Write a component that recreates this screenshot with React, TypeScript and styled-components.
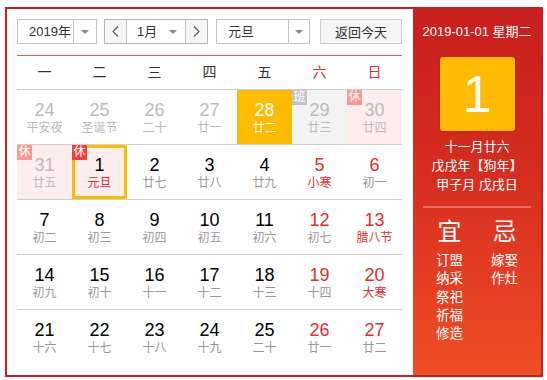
import styled, { createGlobalStyle, css } from "styled-components";

const GlobalStyle = createGlobalStyle`
  html, body {
    margin: 0;
    padding: 0;
    background: #fff;
  }
  body {
    font-family: "Liberation Sans", "Noto Sans CJK SC", sans-serif;
  }
`;

type Tone = "normal" | "weekend";
type Mark = "rest" | "work";

interface Day {
  num: number;
  lunar: string;
  other?: boolean;
  tone?: Tone;
  festival?: boolean;
  mark?: Mark;
  hover?: boolean;
  selected?: boolean;
}

const weeks: Day[][] = [
  [
    { num: 24, lunar: "平安夜", other: true },
    { num: 25, lunar: "圣诞节", other: true },
    { num: 26, lunar: "二十", other: true },
    { num: 27, lunar: "廿一", other: true },
    { num: 28, lunar: "廿二", other: true, hover: true },
    { num: 29, lunar: "廿三", other: true, mark: "work" },
    { num: 30, lunar: "廿四", other: true, mark: "rest" },
  ],
  [
    { num: 31, lunar: "廿五", other: true, mark: "rest" },
    { num: 1, lunar: "元旦", festival: true, mark: "rest", selected: true },
    { num: 2, lunar: "廿七" },
    { num: 3, lunar: "廿八" },
    { num: 4, lunar: "廿九" },
    { num: 5, lunar: "小寒", tone: "weekend", festival: true },
    { num: 6, lunar: "初一", tone: "weekend" },
  ],
  [
    { num: 7, lunar: "初二" },
    { num: 8, lunar: "初三" },
    { num: 9, lunar: "初四" },
    { num: 10, lunar: "初五" },
    { num: 11, lunar: "初六" },
    { num: 12, lunar: "初七", tone: "weekend" },
    { num: 13, lunar: "腊八节", tone: "weekend", festival: true },
  ],
  [
    { num: 14, lunar: "初九" },
    { num: 15, lunar: "初十" },
    { num: 16, lunar: "十一" },
    { num: 17, lunar: "十二" },
    { num: 18, lunar: "十三" },
    { num: 19, lunar: "十四", tone: "weekend" },
    { num: 20, lunar: "大寒", tone: "weekend", festival: true },
  ],
  [
    { num: 21, lunar: "十六" },
    { num: 22, lunar: "十七" },
    { num: 23, lunar: "十八" },
    { num: 24, lunar: "十九" },
    { num: 25, lunar: "二十" },
    { num: 26, lunar: "廿一", tone: "weekend" },
    { num: 27, lunar: "廿二", tone: "weekend" },
  ],
];

const weekdays = ["一", "二", "三", "四", "五", "六", "日"];
const goodList = ["订盟", "纳采", "祭祀", "祈福", "修造"];
const badList = ["嫁娶", "作灶"];

const Calendar = styled.div`
  margin: 7px 0 0 5px;
  width: 538px;
  height: 370px;
  box-sizing: border-box;
  border: 2px solid #c91f1e;
  display: flex;
`;

const Main = styled.div`
  flex: 1;
  min-width: 0;
  padding: 10px 11px 0 10px;
  background: #fff;
`;

const Toolbar = styled.div`
  display: flex;
  align-items: center;
  height: 25px;
  margin-bottom: 11px;
`;

const Select = styled.div<{ $width: number; $text: number }>`
  display: flex;
  width: ${(p) => p.$width}px;
  height: 25px;
  box-sizing: border-box;
  border: 1px solid #c4c4c4;
  font-size: 13px;
  color: #333;
  & > span:first-child {
    width: ${(p) => p.$text}px;
    padding-left: 11px;
    line-height: 23px;
    box-sizing: border-box;
  }
`;

const Caret = styled.span`
  flex: 1;
  display: flex;
  align-items: center;
  justify-content: center;
  border-left: 1px solid #c4c4c4;
  &::after {
    content: "";
    border-left: 4px solid transparent;
    border-right: 4px solid transparent;
    border-top: 4px solid #8a8a8a;
  }
`;

const MonthGroup = styled.div`
  display: flex;
  width: 104px;
  height: 25px;
  box-sizing: border-box;
  border: 1px solid #b5b5b5;
  margin: 0 8px 0 7px;
  font-size: 13px;
  color: #333;
`;

const StepButton = styled.span<{ $side: "left" | "right" }>`
  width: 22px;
  box-sizing: border-box;
  display: flex;
  align-items: center;
  justify-content: center;
  background: #f7f7f7;
  ${(p) =>
    p.$side === "left"
      ? css`border-right: 1px solid #c4c4c4;`
      : css`border-left: 1px solid #c4c4c4;`}
  svg {
    width: 7px;
    height: 11px;
  }
`;

const MonthSelect = styled.span`
  flex: 1;
  display: flex;
  align-items: center;
  & > span:first-child {
    width: 36px;
    padding-left: 10px;
    line-height: 23px;
    box-sizing: border-box;
  }
  & > span:last-child {
    flex: 1;
    display: flex;
    justify-content: center;
    padding-right: 2px;
    &::after {
      content: "";
      border-left: 4px solid transparent;
      border-right: 4px solid transparent;
      border-top: 4px solid #8a8a8a;
    }
  }
`;

const TodayButton = styled.button`
  margin-left: 10px;
  width: 82px;
  height: 25px;
  box-sizing: border-box;
  border: 1px solid #cfcfcf;
  background: #f5f5f5;
  font-family: inherit;
  font-size: 13px;
  color: #333;
  padding: 0;
`;

const Header = styled.div`
  display: grid;
  grid-template-columns: repeat(7, 55px);
  height: 33px;
  border-top: 1px solid #e5594f;
  border-bottom: 1px solid #cfcfcf;
`;

const Weekday = styled.div<{ $red: boolean }>`
  text-align: center;
  line-height: 33px;
  font-size: 14px;
  color: ${(p) => (p.$red ? "#e62d2d" : "#333")};
`;

const Week = styled.div<{ $last: boolean }>`
  display: grid;
  grid-template-columns: repeat(7, 55px);
  border-bottom: ${(p) => (p.$last ? "none" : "1px solid #cfcfcf")};
`;

const Cell = styled.div<{ $bg: string; $selected: boolean }>`
  position: relative;
  height: 54px;
  box-sizing: border-box;
  padding-top: 10px;
  text-align: center;
  background: ${(p) => p.$bg};
  ${(p) => p.$selected && css`box-shadow: inset 0 0 0 3px #ffbb00;`}
`;

const Num = styled.div<{ $color: string }>`
  font-size: 18px;
  line-height: 20px;
  color: ${(p) => p.$color};
`;

const Lunar = styled.div<{ $color: string }>`
  font-size: 12px;
  line-height: 16px;
  color: ${(p) => p.$color};
`;

const Badge = styled.span<{ $bg: string }>`
  position: absolute;
  top: 0;
  left: 0;
  width: 15px;
  height: 15px;
  line-height: 15px;
  font-size: 12px;
  text-align: center;
  color: #fff;
  background: ${(p) => p.$bg};
`;

const Side = styled.div`
  width: 128px;
  flex-shrink: 0;
  background: linear-gradient(180deg, #c91f1e 0%, #d62d20 45%, #f04e25 100%);
  color: #fff;
  display: flex;
  flex-direction: column;
  align-items: center;
`;

const DateLine = styled.div`
  margin-top: 13px;
  font-size: 13px;
  line-height: 20px;
`;

const DayBox = styled.div`
  margin-top: 15px;
  width: 75px;
  height: 74px;
  border-radius: 3px;
  background: #ffbb00;
  box-shadow: 0 1px 3px rgba(120, 20, 0, 0.3);
  display: flex;
  align-items: center;
  justify-content: center;
  font-size: 52px;
  color: #fff;
`;

const LunarInfo = styled.div`
  margin-top: 6px;
  font-size: 13px;
  line-height: 19px;
  text-align: center;
`;

const Divider = styled.div`
  margin-top: 12px;
  width: 108px;
  height: 2px;
  background: rgba(255, 255, 255, 0.3);
`;

const Almanac = styled.div`
  margin-top: 9px;
  display: grid;
  grid-template-columns: 55px 55px;
`;

const AlmanacCol = styled.div`
  display: flex;
  flex-direction: column;
  align-items: center;
`;

const AlmanacTitle = styled.div`
  font-size: 24px;
  line-height: 30px;
  margin-bottom: 5px;
`;

const AlmanacItem = styled.div`
  font-size: 13.5px;
  line-height: 18.3px;
`;

const Chevron = ({ dir }: { dir: "left" | "right" }) => (
  <svg viewBox="0 0 7 11">
    <path
      d={dir === "left" ? "M6 0.5 L1 5.5 L6 10.5" : "M1 0.5 L6 5.5 L1 10.5"}
      fill="none"
      stroke="#555"
      strokeWidth="1.1"
    />
  </svg>
);

function cellBg(d: Day) {
  if (d.hover) return "#ffbb00";
  if (d.mark === "work") return "#f3f3f3";
  if (d.mark === "rest") return "#fdeeee";
  return "#fff";
}

function numColor(d: Day) {
  if (d.hover) return "#fff";
  if (d.other) return "#bbb";
  return d.tone === "weekend" ? "#e62d2d" : "#000";
}

function lunarColor(d: Day) {
  if (d.hover) return "#fff";
  if (d.other) return "#bbb";
  return d.festival ? "#e62d2d" : "#999";
}

function badgeBg(d: Day) {
  if (d.mark === "work") return "#c4c4c4";
  return d.other ? "#f79a94" : "#f5403c";
}

export default function App() {
  return (
    <>
      <GlobalStyle />
      <Calendar>
        <Main>
          <Toolbar>
            <Select $width={80} $text={55}>
              <span>2019年</span>
              <Caret />
            </Select>
            <MonthGroup>
              <StepButton $side="left">
                <Chevron dir="left" />
              </StepButton>
              <MonthSelect>
                <span>1月</span>
                <span />
              </MonthSelect>
              <StepButton $side="right">
                <Chevron dir="right" />
              </StepButton>
            </MonthGroup>
            <Select $width={94} $text={71}>
              <span>元旦</span>
              <Caret />
            </Select>
            <TodayButton>返回今天</TodayButton>
          </Toolbar>
          <Header>
            {weekdays.map((w, i) => (
              <Weekday key={w} $red={i >= 5}>
                {w}
              </Weekday>
            ))}
          </Header>
          {weeks.map((week, wi) => (
            <Week key={wi} $last={wi === weeks.length - 1}>
              {week.map((d) => (
                <Cell key={`${wi}-${d.num}`} $bg={cellBg(d)} $selected={!!d.selected}>
                  {d.mark && (
                    <Badge $bg={badgeBg(d)}>{d.mark === "rest" ? "休" : "班"}</Badge>
                  )}
                  <Num $color={numColor(d)}>{d.num}</Num>
                  <Lunar $color={lunarColor(d)}>{d.lunar}</Lunar>
                </Cell>
              ))}
            </Week>
          ))}
        </Main>
        <Side>
          <DateLine>2019-01-01 星期二</DateLine>
          <DayBox>1</DayBox>
          <LunarInfo>
            <div>十一月廿六</div>
            <div>戊戌年【狗年】</div>
            <div>甲子月 戊戌日</div>
          </LunarInfo>
          <Divider />
          <Almanac>
            <AlmanacCol>
              <AlmanacTitle>宜</AlmanacTitle>
              {goodList.map((g) => (
                <AlmanacItem key={g}>{g}</AlmanacItem>
              ))}
            </AlmanacCol>
            <AlmanacCol>
              <AlmanacTitle>忌</AlmanacTitle>
              {badList.map((b) => (
                <AlmanacItem key={b}>{b}</AlmanacItem>
              ))}
            </AlmanacCol>
          </Almanac>
        </Side>
      </Calendar>
    </>
  );
}
